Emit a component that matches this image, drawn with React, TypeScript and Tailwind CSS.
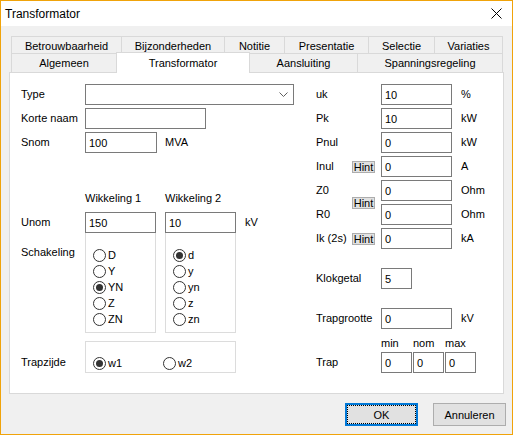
import React from 'react';

const font = "font-['Liberation_Sans',Arial,sans-serif]";

const Radio = ({ label, checked = false }: { label: string; checked?: boolean }) => (
  <div className="flex h-[16px] items-center">
    <span className="flex h-[13px] w-[13px] items-center justify-center rounded-full border border-[#333333] bg-white">
      {checked && <span className="h-[7px] w-[7px] rounded-full bg-[#333333]" />}
    </span>
    <span className="ml-[2px] leading-[16px]">{label}</span>
  </div>
);

const Field = ({ value = '', w }: { value?: string; w: string }) => (
  <div className={`flex h-[21px] items-center border border-[#7a7a7a] bg-white pl-[3px] ${w}`}>
    <span className="leading-[16px]">{value}</span>
  </div>
);

const Hint = () => (
  <div className="flex h-[12px] w-[23px] items-center justify-center border border-[#adadad] bg-[#e1e1e1] text-[11px] leading-[10px]">
    Hint
  </div>
);

const Row = ({ children }: { children: React.ReactNode }) => (
  <div className="flex h-[21px] items-center">{children}</div>
);

const backTabs = [
  { name: 'Betrouwbaarheid', w: 'w-[110px]' },
  { name: 'Bijzonderheden', w: 'w-[103px]' },
  { name: 'Notitie', w: 'w-[60px]' },
  { name: 'Presentatie', w: 'w-[84px]' },
  { name: 'Selectie', w: 'w-[66px]' },
  { name: 'Variaties', w: 'w-[69px] border-r' },
];

export default function App() {
  return (
    <div className={`${font} flex h-[435px] w-[513px] flex-col border border-[#f0a30a] text-[11px] text-black`}>
      {/* title bar */}
      <div className="flex h-[25px] items-center justify-between bg-white pl-[4px] pr-[10px]">
        <span className="text-[12px] leading-[16px]">Transformator</span>
        <svg width="11" height="11" viewBox="0 0 11 11">
          <path d="M0.5 0.5 L10.5 10.5 M10.5 0.5 L0.5 10.5" stroke="#000" strokeWidth="1" />
        </svg>
      </div>

      <div className="flex flex-1 flex-col bg-[#f0f0f0] pt-[10px]">
        {/* tabs */}
        <div className="ml-[10px] flex h-[17px]">
          {backTabs.map((t) => (
            <div
              key={t.name}
              className={`flex h-[17px] items-center justify-center border-l border-t border-[#d9d9d9] pt-[2px] leading-[14px] ${t.w}`}
            >
              {t.name}
            </div>
          ))}
        </div>
        <div className="ml-[10px] flex h-[19px] items-end">
          <div className="flex h-[19px] w-[105px] items-center justify-center border-l border-t border-[#d9d9d9] pt-[1px]">
            Algemeen
          </div>
          <div className="relative z-10 -mb-[1px] flex h-[21px] w-[134px] items-start justify-center border-l border-r border-t border-[#d9d9d9] bg-white pt-[2px] leading-[16px]">
            Transformator
          </div>
          <div className="flex h-[19px] w-[107px] items-center justify-center border-t border-[#d9d9d9] pt-[1px]">
            Aansluiting
          </div>
          <div className="flex h-[19px] w-[146px] items-center justify-center border-l border-r border-t border-[#d9d9d9] pt-[1px]">
            Spanningsregeling
          </div>
        </div>

        {/* panel */}
        <div className="ml-[8px] flex h-[322px] w-[495px] border border-[#d9d9d9] bg-white pl-[11px] pt-[11px]">
          {/* left column */}
          <div className="flex w-[273px] flex-col">
            <Row>
              <span className="w-[64px]">Type</span>
              <div className="flex h-[21px] w-[209px] items-center justify-end border border-[#7a7a7a] bg-white pr-[5px]">
                <svg width="9" height="5" viewBox="0 0 9 5">
                  <path d="M0.5 0.5 L4.5 4.5 L8.5 0.5" fill="none" stroke="#606060" strokeWidth="1" />
                </svg>
              </div>
            </Row>
            <div className="mt-[3px]">
              <Row>
                <span className="w-[64px]">Korte naam</span>
                <Field w="w-[121px]" />
              </Row>
            </div>
            <div className="mt-[3px]">
              <Row>
                <span className="w-[64px]">Snom</span>
                <Field value="100" w="w-[72px]" />
                <span className="ml-[8px]">MVA</span>
              </Row>
            </div>

            <div className="ml-[64px] mt-[37px] flex h-[16px] items-center leading-[16px]">
              <span className="w-[80px]">Wikkeling 1</span>
              <span>Wikkeling 2</span>
            </div>

            <div className="mt-[6px]">
              <Row>
                <span className="w-[64px]">Unom</span>
                <Field value="150" w="w-[71px]" />
                <div className="ml-[9px]">
                  <Field value="10" w="w-[71px]" />
                </div>
                <span className="ml-[9px]">kV</span>
              </Row>
            </div>

            <div className="flex">
              <span className="w-[64px] pt-[11px] leading-[16px]">Schakeling</span>
              <div className="w-[71px] border-b border-l border-r border-[#dcdcdc] pb-[5px] pl-[7px] pt-[14px]">
                <Radio label="D" />
                <Radio label="Y" />
                <Radio label="YN" checked />
                <Radio label="Z" />
                <Radio label="ZN" />
              </div>
              <div className="ml-[9px] w-[71px] border-b border-l border-r border-[#dcdcdc] pb-[5px] pl-[7px] pt-[14px]">
                <Radio label="d" checked />
                <Radio label="y" />
                <Radio label="yn" />
                <Radio label="z" />
                <Radio label="zn" />
              </div>
            </div>

            <div className="mt-[8px] flex">
              <span className="w-[64px] pt-[13px] leading-[16px]">Trapzijde</span>
              <div className="flex w-[151px] border border-[#dcdcdc] pb-[1px] pl-[7px] pt-[13px]">
                <div className="w-[70px]">
                  <Radio label="w1" checked />
                </div>
                <Radio label="w2" />
              </div>
            </div>
          </div>

          {/* right column */}
          <div className="ml-[22px] flex flex-col">
            <Row>
              <span className="w-[65px]">uk</span>
              <Field value="10" w="w-[71px]" />
              <span className="ml-[9px]">%</span>
            </Row>
            <div className="mt-[3px]">
              <Row>
                <span className="w-[65px]">Pk</span>
                <Field value="10" w="w-[71px]" />
                <span className="ml-[9px]">kW</span>
              </Row>
            </div>
            <div className="mt-[3px]">
              <Row>
                <span className="w-[65px]">Pnul</span>
                <Field value="0" w="w-[71px]" />
                <span className="ml-[9px]">kW</span>
              </Row>
            </div>
            <div className="mt-[3px]">
              <Row>
                <div className="flex w-[65px] items-center pr-[6px]">
                  <span className="flex-1">Inul</span>
                  <Hint />
                </div>
                <Field value="0" w="w-[71px]" />
                <span className="ml-[9px]">A</span>
              </Row>
            </div>
            <div className="mt-[3px] flex">
              <div className="flex w-[36px] flex-col gap-[3px]">
                <div className="flex h-[21px] items-center">Z0</div>
                <div className="flex h-[21px] items-center">R0</div>
              </div>
              <div className="mr-[6px] flex items-center">
                <Hint />
              </div>
              <div className="flex flex-col gap-[3px]">
                <Field value="0" w="w-[71px]" />
                <Field value="0" w="w-[71px]" />
              </div>
              <div className="ml-[9px] flex flex-col gap-[3px]">
                <div className="flex h-[21px] items-center">Ohm</div>
                <div className="flex h-[21px] items-center">Ohm</div>
              </div>
            </div>
            <div className="mt-[3px]">
              <Row>
                <div className="flex w-[65px] items-center pr-[6px]">
                  <span className="flex-1">Ik (2s)</span>
                  <Hint />
                </div>
                <Field value="0" w="w-[71px]" />
                <span className="ml-[9px]">kA</span>
              </Row>
            </div>

            <div className="mt-[19px]">
              <Row>
                <span className="w-[65px]">Klokgetal</span>
                <Field value="5" w="w-[31px]" />
              </Row>
            </div>
            <div className="mt-[19px]">
              <Row>
                <span className="w-[65px]">Trapgrootte</span>
                <Field value="0" w="w-[71px]" />
                <span className="ml-[9px]">kV</span>
              </Row>
            </div>
            <div className="ml-[65px] mt-[7px] flex h-[14px] items-center leading-[14px]">
              <span className="w-[32px]">min</span>
              <span className="w-[32px]">nom</span>
              <span>max</span>
            </div>
            <div className="mt-[2px]">
              <Row>
                <span className="w-[65px]">Trap</span>
                <div className="flex gap-[1px]">
                  <Field value="0" w="w-[31px]" />
                  <Field value="0" w="w-[31px]" />
                  <Field value="0" w="w-[31px]" />
                </div>
              </Row>
            </div>
          </div>
        </div>

        {/* buttons */}
        <div className="mt-[9px] flex justify-end gap-[15px] pr-[6px]">
          <div className="flex h-[23px] w-[73px] items-center justify-center border-2 border-[#0078d7] bg-[#e1e1e1]">
            <div className="flex h-full w-full items-center justify-center border border-dotted border-black leading-[16px]">
              OK
            </div>
          </div>
          <div className="flex h-[23px] w-[73px] items-center justify-center border border-[#adadad] bg-[#e1e1e1] leading-[16px]">
            Annuleren
          </div>
        </div>
      </div>
    </div>
  );
}
